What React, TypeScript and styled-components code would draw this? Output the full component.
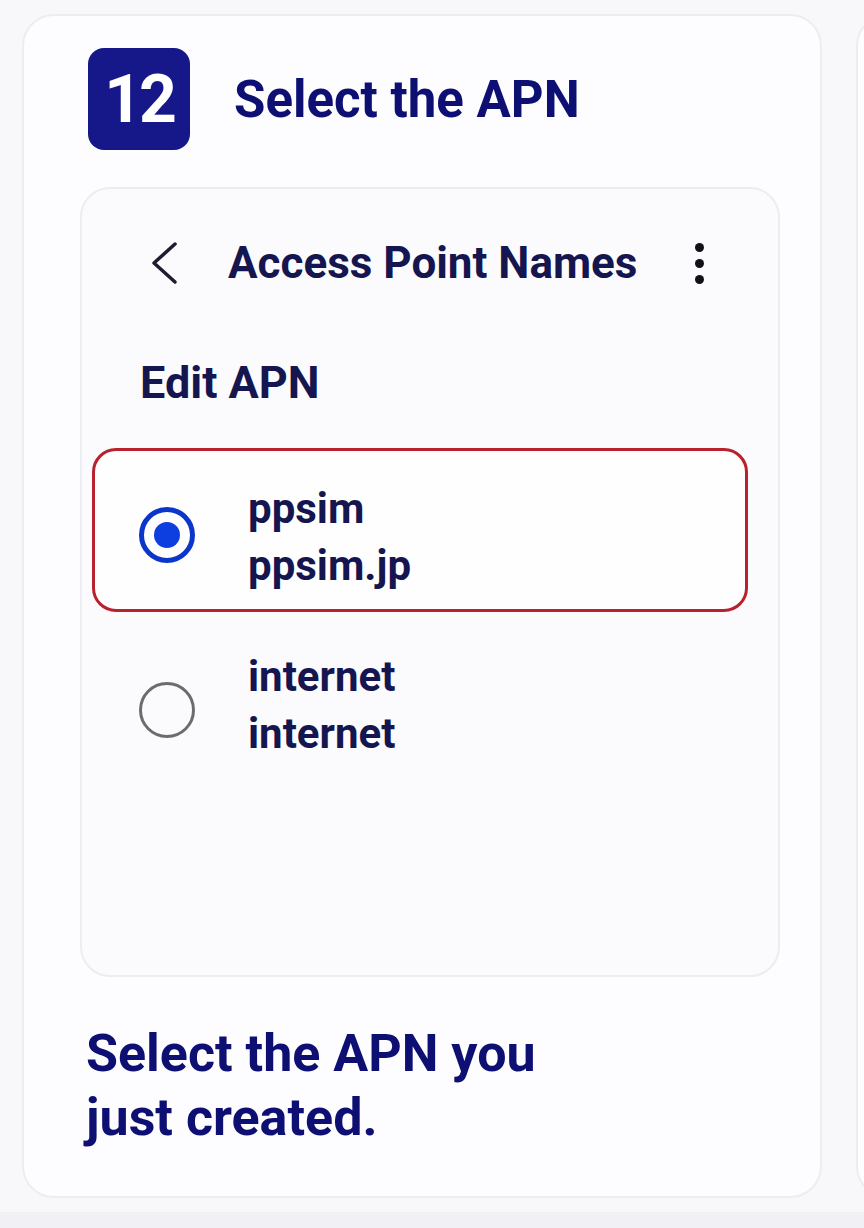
import React from 'react';
import styled, { createGlobalStyle } from 'styled-components';

const GlobalStyle = createGlobalStyle`
  html, body {
    margin: 0;
    padding: 0;
    background: #f8f8fb;
  }
  body {
    font-family: Roboto, 'Liberation Sans', sans-serif;
  }
`;

type Apn = { name: string; apn: string; selected?: boolean };

const apns: Apn[] = [
  { name: 'ppsim', apn: 'ppsim.jp', selected: true },
  { name: 'internet', apn: 'internet' },
];

const App = () => {
  return (
    <>
      <GlobalStyle />
      <Page>
        <CardRow>
          <StepCard>
            <StepHeader>
              <StepBadge>12</StepBadge>
              <StepTitle>Select the APN</StepTitle>
            </StepHeader>

            <PhoneScreen>
              <Toolbar>
                <BackIcon viewBox="0 0 28 44">
                  <path d="M25 3 L4 22 L25 41" />
                </BackIcon>
                <ToolbarTitle>Access Point Names</ToolbarTitle>
                <Kebab>
                  <Dot />
                  <Dot />
                  <Dot />
                </Kebab>
              </Toolbar>

              <SectionLabel>Edit APN</SectionLabel>

              <ApnList>
                {apns.map(item => (
                  <ApnRow key={item.name} $highlighted={!!item.selected}>
                    <Radio $checked={!!item.selected} />
                    <ApnText $shift={item.selected ? 14 : 0}>
                      <ApnLine>{item.name}</ApnLine>
                      <ApnLine>{item.apn}</ApnLine>
                    </ApnText>
                  </ApnRow>
                ))}
              </ApnList>
            </PhoneScreen>

            <StepNote>
              Select the APN you
              <br />
              just created.
            </StepNote>
          </StepCard>
          <NextCard />
        </CardRow>
        <BottomBand />
      </Page>
    </>
  );
};

const Page = styled.div`
  width: 864px;
  height: 1228px;
  overflow: hidden;
  display: flex;
  flex-direction: column;
`;

const CardRow = styled.div`
  display: flex;
  gap: 34px;
  padding: 14px 0 0 22px;
`;

const StepCard = styled.div`
  flex: none;
  box-sizing: border-box;
  width: 800px;
  height: 1184px;
  padding: 32px 40px 0 56px;
  background: #fdfdff;
  border: 2px solid #ececf2;
  border-radius: 32px;
  display: flex;
  flex-direction: column;
`;

const NextCard = styled.div`
  flex: none;
  width: 300px;
  height: 1184px;
  box-sizing: border-box;
  background: #fdfdff;
  border: 2px solid #ececf2;
  border-radius: 32px;
`;

const BottomBand = styled.div`
  margin-top: 14px;
  flex: 1;
  background: #f1f1f5;
`;

const StepHeader = styled.div`
  display: flex;
  align-items: center;
  gap: 44px;
  padding-left: 8px;
`;

const StepBadge = styled.div`
  width: 102px;
  height: 102px;
  border-radius: 16px;
  background: #16188a;
  color: #ffffff;
  display: flex;
  align-items: center;
  justify-content: center;
  font-size: 66px;
  font-weight: 700;
  letter-spacing: -3px;
`;

const StepTitle = styled.h1`
  margin: 0;
  font-size: 51px;
  font-weight: 700;
  color: #0e0f72;
`;

const PhoneScreen = styled.div`
  margin-top: 37px;
  box-sizing: border-box;
  height: 790px;
  background: #fbfbfd;
  border: 2px solid #ececf2;
  border-radius: 30px;
  padding-top: 52px;
  display: flex;
  flex-direction: column;
`;

const Toolbar = styled.div`
  display: flex;
  align-items: center;
  height: 44px;
  padding: 0 74px 0 68px;
`;

const BackIcon = styled.svg`
  width: 28px;
  height: 44px;
  fill: none;
  stroke: #1d1d2e;
  stroke-width: 3.5;
  stroke-linecap: round;
  stroke-linejoin: round;
`;

const ToolbarTitle = styled.div`
  margin-left: 50px;
  font-size: 44px;
  font-weight: 700;
  color: #15164f;
`;

const Kebab = styled.div`
  margin-left: auto;
  display: flex;
  flex-direction: column;
  gap: 7px;
`;

const Dot = styled.span`
  width: 9px;
  height: 9px;
  border-radius: 50%;
  background: #111118;
`;

const SectionLabel = styled.div`
  margin-top: 70px;
  padding-left: 58px;
  font-size: 45px;
  line-height: 56px;
  font-weight: 700;
  color: #15164f;
`;

const ApnList = styled.div`
  margin: 37px 30px 0 10px;
  display: flex;
  flex-direction: column;
  gap: 11px;
`;

const ApnRow = styled.div<{ $highlighted: boolean }>`
  box-sizing: border-box;
  height: 164px;
  display: flex;
  align-items: center;
  gap: 53px;
  padding-left: 44px;
  border: 3px solid ${({ $highlighted }) => ($highlighted ? '#b8222c' : 'transparent')};
  border-radius: 24px;
  background: ${({ $highlighted }) => ($highlighted ? '#fffefe' : 'transparent')};
`;

const Radio = styled.span<{ $checked: boolean }>`
  box-sizing: border-box;
  width: 56px;
  height: 56px;
  border-radius: 50%;
  border: ${({ $checked }) => ($checked ? '5px solid #0c36c9' : '3.5px solid #6c6c70')};
  display: flex;
  align-items: center;
  justify-content: center;
  margin-top: 10px;

  &::after {
    content: '';
    width: 26px;
    height: 26px;
    border-radius: 50%;
    background: #0c3ee0;
    display: ${({ $checked }) => ($checked ? 'block' : 'none')};
  }
`;

const ApnText = styled.div<{ $shift: number }>`
  display: flex;
  flex-direction: column;
  padding-top: ${({ $shift }) => $shift}px;
`;

const ApnLine = styled.div`
  font-size: 42px;
  line-height: 57px;
  font-weight: 700;
  color: #15164f;
`;

const StepNote = styled.p`
  margin: 45px 0 0 6px;
  font-size: 52px;
  line-height: 64px;
  font-weight: 700;
  color: #0e0f72;
`;

export default App;
